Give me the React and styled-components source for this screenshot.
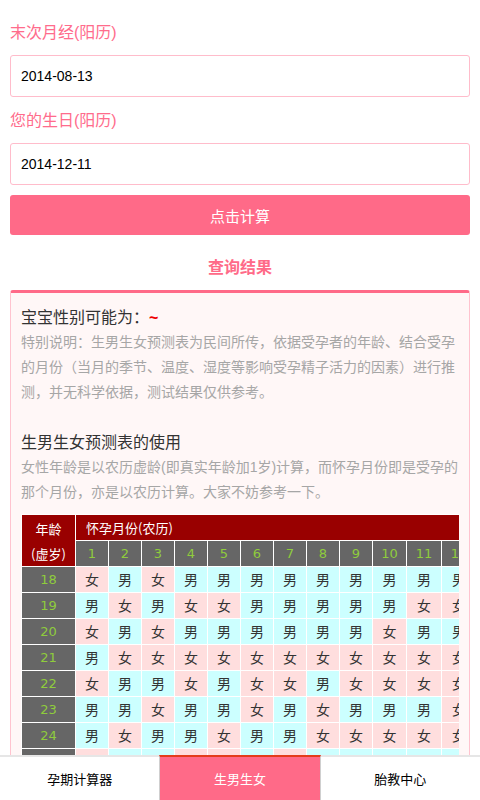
import React from 'react'
import styled, { createGlobalStyle } from 'styled-components'

const GlobalStyle = createGlobalStyle`
  html, body {
    margin: 0;
    padding: 0;
    background: #fff;
    font-family: "Liberation Sans", "Noto Sans CJK SC", sans-serif;
  }
`

const Page = styled.div`
  padding: 22px 10px 60px;
`

const Field = styled.div`
  margin-bottom: 13px;
`

const Label = styled.div`
  font-size: 16px;
  line-height: 22px;
  color: #ff6c8c;
  margin-bottom: 11px;
`

const Input = styled.input`
  display: block;
  box-sizing: border-box;
  width: 100%;
  height: 42px;
  margin: 0;
  padding: 0 10px;
  border: 1px solid #ffbccb;
  border-radius: 3px;
  font-family: "Liberation Sans", sans-serif;
  font-size: 14px;
  color: #000;
  background: #fff;
  outline: none;
`

const Button = styled.button`
  display: block;
  width: 100%;
  height: 40px;
  margin-top: -3px;
  border: 0;
  border-radius: 3px;
  background: #ff6a88;
  color: #fff;
  font-family: "Liberation Sans", "Noto Sans CJK SC", sans-serif;
  font-size: 15px;
`

const ResultTitle = styled.h2`
  margin: 21px 0 10px;
  text-align: center;
  font-size: 16px;
  line-height: 24px;
  font-weight: 700;
  color: #ff6a88;
`

const ResultBox = styled.div`
  border: 1px solid #ffc3cf;
  border-top: 3px solid #ff6a88;
  border-radius: 3px;
  background: #fff7f7;
  padding: 12px 10px 20px;
`

const Heading = styled.div`
  font-size: 16px;
  line-height: 25px;
  color: #333;
`

const Tilde = styled.span`
  color: #e00;
  font-weight: 700;
`

const Note = styled.p`
  margin: 0 0 ${p => (p.$gap ? '25px' : '0')};
  font-size: 14px;
  line-height: 25px;
  color: #a6a6a6;
`

const TableWrap = styled.div`
  margin-top: 9px;
  overflow: hidden;
`

const Table = styled.table`
  border-collapse: collapse;
  font-size: 13px;
  white-space: nowrap;
`

const AgeHead = styled.th`
  width: 53px;
  padding: 0;
  border: 1px solid #fff;
  background: #990000;
  color: #fff;
  font-weight: 400;
  font-size: 13px;
  line-height: 25px;
  font-family: "Noto Sans CJK SC", sans-serif;
`

const MonthHead = styled.th`
  padding: 0 10px;
  height: 25px;
  line-height: 25px;
  border: 1px solid #fff;
  border-bottom: 0;
  background: #990000;
  color: #fff;
  font-weight: 400;
  font-size: 13px;
  text-align: left;
  font-family: "Noto Sans CJK SC", sans-serif;
`

const Num = styled.th`
  min-width: ${p => p.$w}px;
  height: 25px;
  line-height: 25px;
  padding: 0;
  border: 1px solid #fff;
  background: #666;
  color: #8fcc3c;
  font-weight: 400;
  font-family: "DejaVu Sans", sans-serif;
  font-size: 13px;
`

const Cell = styled.td`
  height: 25px;
  line-height: 25px;
  padding: 0;
  border: 1px solid #fff;
  text-align: center;
  font-family: "Noto Sans CJK SC", sans-serif;
  font-size: 14px;
  color: #333;
  background: ${p => (p.$girl ? '#ffdede' : '#ccffff')};
`

const Tabs = styled.nav`
  position: fixed;
  left: 0;
  right: 0;
  bottom: 0;
  display: flex;
  height: 43px;
  background: #fff;
  border-top: 2px solid #e6e6e6;
`

const Tab = styled.div`
  flex: 1;
  display: flex;
  align-items: center;
  justify-content: center;
  margin-top: ${p => (p.$active ? '-2px' : '0')};
  border-top: ${p => (p.$active ? '2px solid #e43d1c' : '0')};
  border-left: ${p => (p.$active ? '1px solid #cfcfcf' : '0')};
  border-right: ${p => (p.$active ? '1px solid #cfcfcf' : '0')};
  background: ${p => (p.$active ? '#ff6a88' : '#fff')};
  color: ${p => (p.$active ? '#fff' : '#000')};
  font-size: 13px;
  font-family: "Noto Sans CJK SC", sans-serif;
`

const chart = [
  '女男女男男男男男男男男男',
  '男女男女女男男男男男女女',
  '女男女男男男男男男女男男',
  '男女女女女女女女女女女女',
  '女男男女男女女男女女女女',
  '男男女男男女男女男男男女',
  '男女男男女男男女女女女女',
  '女男男女女男女男男男男男',
  '男女男女女男女男女女女女',
  '女男女男女女男男男男女男',
  '男女男女女女男男男男女女',
  '女男女女男男男男男女女女',
  '男女女女女女女女女女男男',
  '男女男女女女女女女女女男',
  '男女男女女女女女女女女男',
  '女男女男女女女男女女女男',
  '男女男女女女女女女女男男',
  '男男女男女女女男女女男男',
  '女男男女男女女女男男男男',
  '男女男男女男女男女男女男',
  '女男女男男女男女男女男女',
  '男女男男男女女男女男女女',
  '女男女男女男男女男女男女',
  '男女男女男女男男女男女男',
  '女男女男女男女男男女男女',
  '男女男女男女男女男男男男',
  '男男女男男女男女男女女女',
  '女男男女女女男女男女男男'
]

const widths = [32, 32, 32, 32, 32, 32, 32, 32, 32, 33, 34, 34]

export default function App () {
  return (
    <>
      <GlobalStyle />
      <Page>
        <Field>
          <Label>末次月经(阳历)</Label>
          <Input defaultValue='2014-08-13' />
        </Field>
        <Field>
          <Label>您的生日(阳历)</Label>
          <Input defaultValue='2014-12-11' />
        </Field>
        <Button>点击计算</Button>

        <ResultTitle>查询结果</ResultTitle>
        <ResultBox>
          <Heading>宝宝性别可能为：<Tilde>~</Tilde></Heading>
          <Note $gap>特别说明：生男生女预测表为民间所传，依据受孕者的年龄、结合受孕的月份（当月的季节、温度、湿度等影响受孕精子活力的因素）进行推测，并无科学依据，测试结果仅供参考。</Note>
          <Heading>生男生女预测表的使用</Heading>
          <Note>女性年龄是以农历虚龄(即真实年龄加1岁)计算，而怀孕月份即是受孕的那个月份，亦是以农历计算。大家不妨参考一下。</Note>
          <TableWrap>
            <Table>
              <thead>
                <tr>
                  <AgeHead rowSpan={2}>年龄<br />(虚岁)</AgeHead>
                  <MonthHead colSpan={12}>怀孕月份(农历)</MonthHead>
                </tr>
                <tr>
                  {widths.map((w, i) => <Num key={i} $w={w}>{i + 1}</Num>)}
                </tr>
              </thead>
              <tbody>
                {chart.map((row, r) => (
                  <tr key={r}>
                    <Num $w={53}>{18 + r}</Num>
                    {row.split('').map((s, c) => (
                      <Cell key={c} $girl={s === '女'}>{s}</Cell>
                    ))}
                  </tr>
                ))}
              </tbody>
            </Table>
          </TableWrap>
        </ResultBox>
      </Page>
      <Tabs>
        <Tab>孕期计算器</Tab>
        <Tab $active>生男生女</Tab>
        <Tab>胎教中心</Tab>
      </Tabs>
    </>
  )
}
